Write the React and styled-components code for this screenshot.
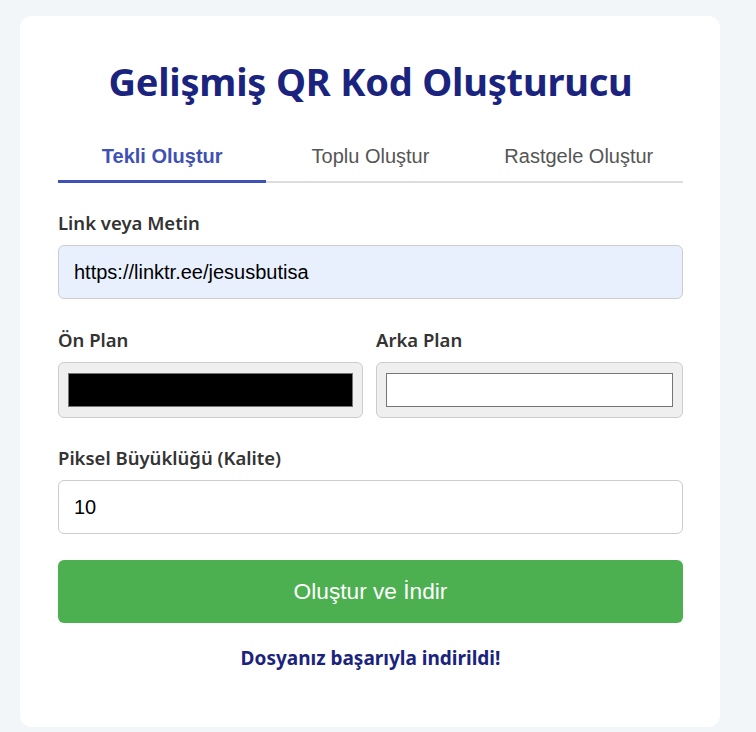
import React, { useState } from "react";
import styled, { createGlobalStyle } from "styled-components";

const GlobalStyle = createGlobalStyle`
  html, body {
    margin: 0;
    padding: 0;
    background: #f3f6f9;
  }
  body {
    font-family: "Noto Sans", "Open Sans", sans-serif;
  }
  * {
    box-sizing: border-box;
  }
`;

const Page = styled.div`
  padding: 16px 36px 5px 20px;
  min-height: 732px;
`;

const Card = styled.div`
  width: 700px;
  background: #ffffff;
  border-radius: 12px;
  padding: 40px 37px 57px 38px;
`;

const Title = styled.h1`
  margin: 0 0 35px;
  text-align: center;
  font-family: "Noto Sans", sans-serif;
  font-size: 38px;
  font-weight: 700;
  line-height: 50px;
  color: #1a237e;
  letter-spacing: -0.2px;
`;

const Tabs = styled.div`
  display: grid;
  grid-template-columns: repeat(3, 1fr);
  border-bottom: 2px solid #dddddd;
  margin-bottom: 28px;
`;

const Tab = styled.button`
  border: none;
  background: none;
  padding: 4px 0 12px;
  margin-bottom: -2px;
  font-family: "Liberation Sans", Arial, sans-serif;
  font-size: 20px;
  line-height: 23px;
  cursor: pointer;
  color: ${(p) => (p.$active ? "#3f51b5" : "#555555")};
  font-weight: ${(p) => (p.$active ? 700 : 400)};
  border-bottom: 3px solid ${(p) => (p.$active ? "#3f51b5" : "transparent")};
`;

const Field = styled.div`
  display: flex;
  flex-direction: column;
  margin-bottom: ${(p) => (p.$mb === undefined ? 29 : p.$mb)}px;
`;

const Label = styled.label`
  font-size: 18.5px;
  font-weight: 600;
  line-height: 24px;
  color: #333333;
  margin-bottom: 10px;
`;

const TextInput = styled.input`
  height: 54px;
  width: 100%;
  padding: 0 15px;
  border: 1px solid #cccccc;
  border-radius: 6px;
  background: ${(p) => (p.$filled ? "#e8f0fe" : "#ffffff")};
  font-family: "Liberation Sans", Arial, sans-serif;
  font-size: 20px;
  color: #000000;
  outline: none;
`;

const Row = styled.div`
  display: grid;
  grid-template-columns: 305px 307px;
  column-gap: 13px;
  margin-bottom: 28px;
`;

const ColorBox = styled.div`
  height: 56px;
  border: 1px solid #cccccc;
  border-radius: 6px;
  background: #efefef;
  padding: 10px 9px;
  display: flex;
`;

const Swatch = styled.div`
  flex: 1;
  border: 1px solid #767676;
  background: ${(p) => p.$color};
`;

const Button = styled.button`
  display: block;
  width: 100%;
  height: 63px;
  border: none;
  border-radius: 6px;
  background: #4caf50;
  color: #ffffff;
  font-family: "Liberation Sans", Arial, sans-serif;
  font-size: 22.7px;
  cursor: pointer;
`;

const Message = styled.p`
  margin: 23px 0 0;
  text-align: center;
  font-size: 19px;
  font-weight: 700;
  line-height: 24px;
  color: #1a237e;
`;

export default function App() {
  const [tab, setTab] = useState(0);
  const tabs = ["Tekli Oluştur", "Toplu Oluştur", "Rastgele Oluştur"];
  return (
    <Page>
      <GlobalStyle />
      <Card>
        <Title>Gelişmiş QR Kod Oluşturucu</Title>
        <Tabs>
          {tabs.map((t, i) => (
            <Tab key={t} $active={tab === i} onClick={() => setTab(i)}>
              {t}
            </Tab>
          ))}
        </Tabs>
        <Field>
          <Label>Link veya Metin</Label>
          <TextInput $filled defaultValue="https://linktr.ee/jesusbutisa" />
        </Field>
        <Row>
          <Field $mb={0}>
            <Label>Ön Plan</Label>
            <ColorBox>
              <Swatch $color="#000000" />
            </ColorBox>
          </Field>
          <Field $mb={0}>
            <Label>Arka Plan</Label>
            <ColorBox>
              <Swatch $color="#ffffff" />
            </ColorBox>
          </Field>
        </Row>
        <Field $mb={26}>
          <Label>Piksel Büyüklüğü (Kalite)</Label>
          <TextInput defaultValue="10" />
        </Field>
        <Button>Oluştur ve İndir</Button>
        <Message>Dosyanız başarıyla indirildi!</Message>
      </Card>
    </Page>
  );
}
